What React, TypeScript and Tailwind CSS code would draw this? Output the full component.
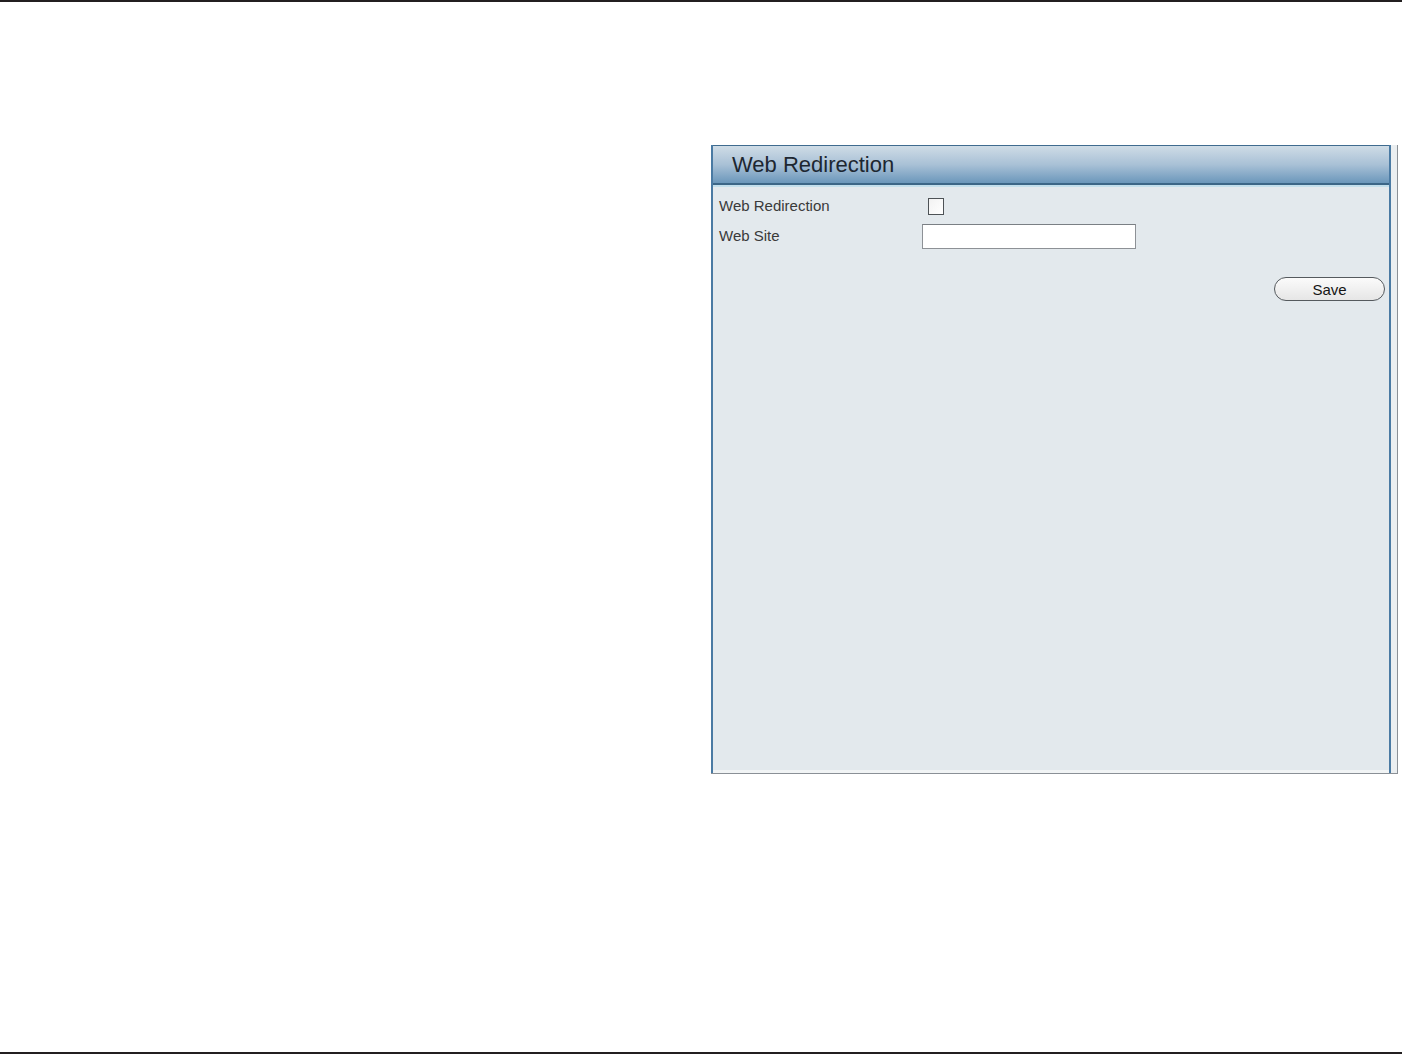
export default function App() {
  return (
    <div className="w-[1402px] h-[1054px] bg-white flex flex-col font-['Liberation_Sans',Arial,sans-serif]">
      {/* page rules */}
      <div className="h-[2px] bg-[#231f20]" />

      <div className="flex-1 pt-[143px] pl-[711px]">
        <section className="w-[687px] h-[629px] flex border-r border-b border-[#8a9096] bg-[#e8edf0]">
          <div className="w-[680px] flex flex-col border-l-2 border-r-2 border-[#4a7aa3] bg-[#e3e9ed]">
            {/* Header */}
            <div className="h-[40px] flex items-center pl-[19px] border-t border-[#3f6b8f] border-b-2 border-b-[#3c6687] bg-gradient-to-b from-[#cfdce6] via-[#a9c1d6] to-[#6b97bb]">
              <h2 className="text-[22px] leading-none text-[#1d2731]">Web Redirection</h2>
            </div>
            <div className="h-[2px] bg-[#c3dfec]" />

            {/* Form */}
            <div className="flex-1 flex flex-col pt-[10px] pl-[6px] pr-[4px] text-[15px] text-[#3a3a3a]">
              <div className="h-[18px] flex items-center">
                <span className="w-[203px]">Web Redirection</span>
                <span className="ml-[6px] w-[16px] h-[17px] border border-[#4d5256] bg-gradient-to-br from-[#f2f2f2] to-[#ffffff]" />
              </div>
              <div className="mt-[9px] h-[25px] flex items-center">
                <span className="w-[203px]">Web Site</span>
                <input
                  type="text"
                  className="w-[214px] h-[25px] border border-[#8d9196] border-t-[#7a7f84] bg-white outline-none px-1 text-[13px]"
                />
              </div>
              <div className="mt-[28px] flex justify-end">
                <button className="w-[111px] h-[24px] rounded-full border border-[#555a5e] bg-gradient-to-b from-[#fbfbfb] to-[#e6e6e6] text-[15px] leading-none text-[#151515]">
                  Save
                </button>
              </div>
            </div>
            <div className="h-[3px] bg-[#f1f4f5]" />
          </div>
          <div className="flex-1 bg-[#eaeef0]" />
        </section>
      </div>

      <div className="h-[2px] bg-[#231f20]" />
    </div>
  )
}
